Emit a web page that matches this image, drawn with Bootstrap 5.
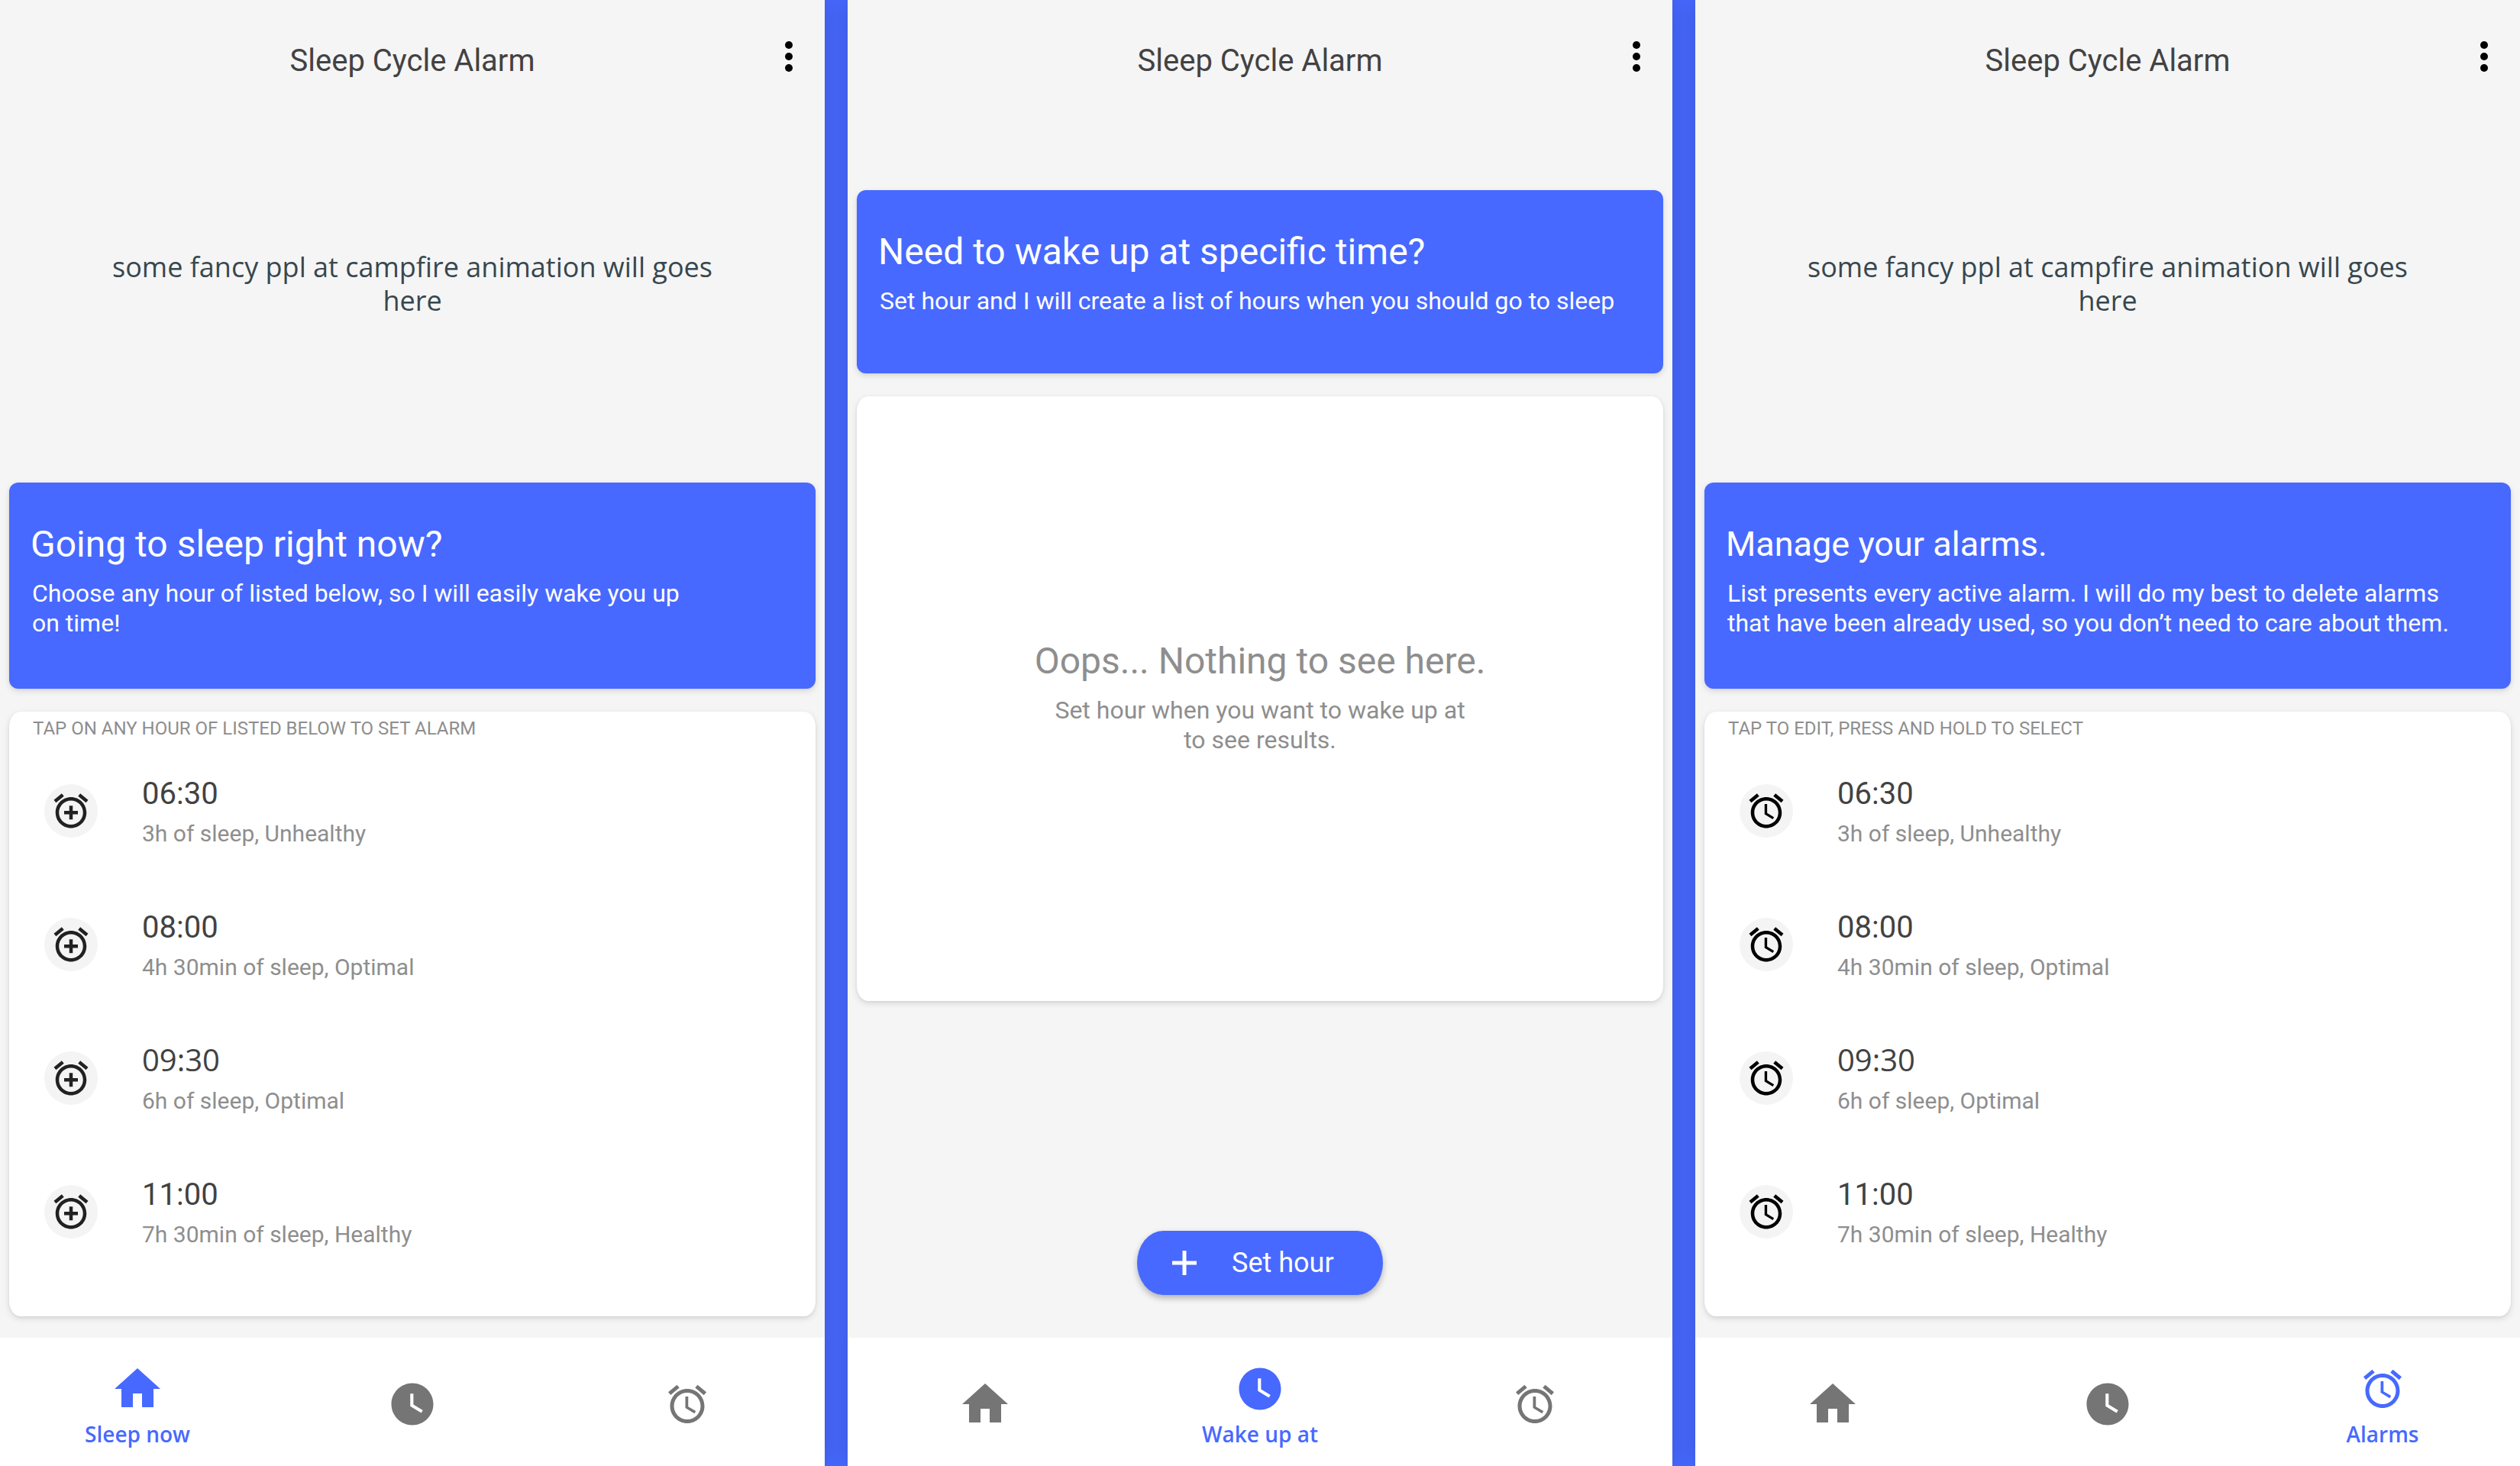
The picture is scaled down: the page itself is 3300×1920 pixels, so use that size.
<!DOCTYPE html>
<html lang="en">
<head>
<meta charset="utf-8">
<meta name="viewport" content="width=device-width, initial-scale=1">
<title>Sleep Cycle Alarm</title>
<link href="https://cdn.jsdelivr.net/npm/bootstrap@5.3.0/dist/css/bootstrap.min.css" rel="stylesheet">
<style>
  :root { --sca-blue: #4769ff; --sca-page: #f5f5f5; --sca-muted: #8e8e8e; }
  body { background: var(--sca-blue); font-family: Roboto, sans-serif; color: #424242; }
  .screens { gap: 30px; min-height: 100vh; }
  .screen { flex: 1 1 0; min-width: 0; background: var(--sca-page); box-shadow: 0 0 30px rgba(0, 0, 0, .16); }
  .topbar { height: 156px; padding: 4px 21px 0; }
  .topbar h1 { font-size: 40px; line-height: 48px; font-weight: 400; margin: 0; }
  .menu-btn, .menu-space { width: 52px; }
  .menu-btn { border: 0; background: none; padding: 0; line-height: 0; margin-bottom: 12px; }
  .scene { height: 476px; padding: 172px 130px 0; font: 400 36px/44px "Open Sans", sans-serif; color: #37474f; }
  .scene-none { height: 93px; }
  .content { padding: 0 12px; gap: 30px; }
  .panel { border: 0; box-shadow: 0 3px 8px rgba(0, 0, 0, .12), 0 1px 3px rgba(0, 0, 0, .06); }
  .hero { background: var(--sca-blue); color: #fff; border-radius: 12px; padding: 53px 30px 66px; }
  .hero h2, .empty h2 { font-size: 48px; line-height: 56px; font-weight: 400; margin: 0 0 17px; }
  .hero h2 { margin-left: -2px; }
  .hero p, .empty p { font-size: 32px; line-height: 39px; margin: 0; }
  .hero-one { padding-bottom: 75px; }
  .hero .title-compact { font-size: 45px; }
  .sheet { background: #fff; border-radius: 15px / 20px; height: 792px; }
  .sheet-note { font-size: 24px; line-height: 28px; color: var(--sca-muted); margin: 0; padding: 8px 31px 0; text-transform: uppercase; }
  .hours { margin: 0; padding: 0; list-style: none; }
  .hours li { height: 175px; padding: 59px 46px 0; gap: 58px; }
  .dot { width: 70px; height: 70px; background: #f4f4f4; flex: none; }
  .hour-text { margin-top: -11px; }
  .hour { font-size: 40px; line-height: 48px; color: #424242; }
  .hour-alt { font-family: "Open Sans", sans-serif; line-height: 44px; padding-bottom: 4px; }
  .detail { font-size: 30px; line-height: 36px; margin-top: 10px; color: var(--sca-muted); }
  .empty { color: var(--sca-muted); padding-bottom: 3px; }
  .set-hour { width: 322px; height: 84px; border: 0; border-radius: 34px / 42px; background: var(--sca-blue); color: #fff; font-size: 36px; line-height: 44px; gap: 44px; padding: 0 0 0 44px; box-shadow: 0 4px 8px rgba(0, 0, 0, .28); margin-bottom: 56px; }
  .tabbar { height: 168px; background: #fff; padding-top: 6px; }
  .tab { flex: 1 1 0; gap: 5px; color: #757575; text-decoration: none; font: 600 28px/36px "Open Sans", sans-serif; }
  .tab-icon { width: 72px; height: 72px; }
  .tab.active { color: var(--sca-blue); padding-top: 1px; }
</style>
</head>
<body>
<svg class="d-none" xmlns="http://www.w3.org/2000/svg">
  <symbol id="i-home" viewBox="0 0 24 24"><path d="M10 20v-6h4v6h5v-8h3L12 3 2 12h3v8z"/></symbol>
  <symbol id="i-clock" viewBox="0 0 24 24"><path d="M12 2C6.500 2 2 6.500 2 12s4.500 10 10 10 10-4.500 10-10S17.500 2 12 2zm4.200 14.200L11 13V7h1.500v5.200l4.500 2.700-.8 1.300z"/></symbol>
  <symbol id="i-alarm" viewBox="0 0 24 24"><path d="M22 5.720l-4.600-3.860-1.290 1.530 4.600 3.860L22 5.720zM7.880 3.390L6.600 1.860 2 5.710l1.290 1.530 4.590-3.850zM12.500 8H11v6l4.750 2.850.75-1.230-4-2.370V8zM12 4c-4.970 0-9 4.030-9 9s4.020 9 9 9c4.970 0 9-4.030 9-9s-4.030-9-9-9zm0 16c-3.870 0-7-3.130-7-7s3.130-7 7-7 7 3.130 7 7-3.130 7-7 7z"/></symbol>
  <symbol id="i-alarm-add" viewBox="0 0 24 24"><path d="M7.880 3.390L6.600 1.860 2 5.710l1.290 1.530 4.590-3.850zM22 5.720l-4.600-3.860-1.290 1.530 4.600 3.860L22 5.720zM12 4c-4.970 0-9 4.030-9 9s4.020 9 9 9c4.970 0 9-4.030 9-9s-4.030-9-9-9zm0 16c-3.870 0-7-3.130-7-7s3.130-7 7-7 7 3.130 7 7-3.130 7-7 7zm1-11h-2v3H8v2h3v3h2v-3h3v-2h-3V9z"/></symbol>
  <symbol id="i-more" viewBox="0 0 12 42"><circle cx="6" cy="6" r="5"/><circle cx="6" cy="21" r="5"/><circle cx="6" cy="36" r="5"/></symbol>
</svg>

<div class="screens d-flex">

  <section class="screen d-flex flex-column">
    <header class="topbar d-flex align-items-center justify-content-between">
      <span class="menu-space"></span>
      <h1>Sleep Cycle Alarm</h1>
      <button class="menu-btn" type="button" aria-label="More options"><svg width="12" height="42"><use href="#i-more"/></svg></button>
    </header>
    <div class="scene text-center">some fancy ppl at campfire animation will goes here</div>
    <main class="content d-flex flex-column flex-grow-1">
      <div class="panel hero">
        <h2>Going to sleep right now?</h2>
        <p>Choose any hour of listed below, so I will easily wake you up<br>on time!</p>
      </div>
      <div class="panel sheet">
        <p class="sheet-note">Tap on any hour of listed below to set alarm</p>
        <ul class="hours">
          <li class="d-flex"><span class="dot rounded-circle d-flex align-items-center justify-content-center"><svg width="54" height="54" fill="#212121"><use href="#i-alarm-add"/></svg></span><div class="hour-text"><div class="hour">06:30</div><div class="detail">3h of sleep, Unhealthy</div></div></li>
          <li class="d-flex"><span class="dot rounded-circle d-flex align-items-center justify-content-center"><svg width="54" height="54" fill="#212121"><use href="#i-alarm-add"/></svg></span><div class="hour-text"><div class="hour">08:00</div><div class="detail">4h 30min of sleep, Optimal</div></div></li>
          <li class="d-flex"><span class="dot rounded-circle d-flex align-items-center justify-content-center"><svg width="54" height="54" fill="#212121"><use href="#i-alarm-add"/></svg></span><div class="hour-text"><div class="hour hour-alt">09:30</div><div class="detail">6h of sleep, Optimal</div></div></li>
          <li class="d-flex"><span class="dot rounded-circle d-flex align-items-center justify-content-center"><svg width="54" height="54" fill="#212121"><use href="#i-alarm-add"/></svg></span><div class="hour-text"><div class="hour">11:00</div><div class="detail">7h 30min of sleep, Healthy</div></div></li>
        </ul>
      </div>
    </main>
    <nav class="tabbar d-flex">
      <a class="tab active d-flex flex-column align-items-center justify-content-center" href="#"><span class="tab-icon d-flex align-items-center justify-content-center"><svg width="72" height="72" fill="currentColor"><use href="#i-home"/></svg></span>Sleep now</a>
      <a class="tab d-flex flex-column align-items-center justify-content-center" href="#" aria-label="Wake up at"><span class="tab-icon d-flex align-items-center justify-content-center"><svg width="66" height="66" fill="currentColor"><use href="#i-clock"/></svg></span></a>
      <a class="tab d-flex flex-column align-items-center justify-content-center" href="#" aria-label="Alarms"><span class="tab-icon d-flex align-items-center justify-content-center"><svg width="60" height="60" fill="currentColor"><use href="#i-alarm"/></svg></span></a>
    </nav>
  </section>

  <section class="screen d-flex flex-column">
    <header class="topbar d-flex align-items-center justify-content-between">
      <span class="menu-space"></span>
      <h1>Sleep Cycle Alarm</h1>
      <button class="menu-btn" type="button" aria-label="More options"><svg width="12" height="42"><use href="#i-more"/></svg></button>
    </header>
    <div class="scene-none"></div>
    <main class="content d-flex flex-column flex-grow-1">
      <div class="panel hero hero-one">
        <h2>Need to wake up at specific time?</h2>
        <p>Set hour and I will create a list of hours when you should go to sleep</p>
      </div>
      <div class="panel sheet empty d-flex flex-column align-items-center justify-content-center text-center">
        <h2>Oops... Nothing to see here.</h2>
        <p>Set hour when you want to wake up at<br>to see results.</p>
      </div>
      <button class="set-hour d-flex align-items-center align-self-center mt-auto" type="button"><svg width="36" height="36" viewBox="0 0 36 36" fill="none" stroke="currentColor" stroke-width="5"><path d="M18 2v32M2 18h32"/></svg>Set hour</button>
    </main>
    <nav class="tabbar d-flex">
      <a class="tab d-flex flex-column align-items-center justify-content-center" href="#" aria-label="Sleep now"><span class="tab-icon d-flex align-items-center justify-content-center"><svg width="72" height="72" fill="currentColor"><use href="#i-home"/></svg></span></a>
      <a class="tab active d-flex flex-column align-items-center justify-content-center" href="#"><span class="tab-icon d-flex align-items-center justify-content-center"><svg width="66" height="66" fill="currentColor"><use href="#i-clock"/></svg></span>Wake up at</a>
      <a class="tab d-flex flex-column align-items-center justify-content-center" href="#" aria-label="Alarms"><span class="tab-icon d-flex align-items-center justify-content-center"><svg width="60" height="60" fill="currentColor"><use href="#i-alarm"/></svg></span></a>
    </nav>
  </section>

  <section class="screen d-flex flex-column">
    <header class="topbar d-flex align-items-center justify-content-between">
      <span class="menu-space"></span>
      <h1>Sleep Cycle Alarm</h1>
      <button class="menu-btn" type="button" aria-label="More options"><svg width="12" height="42"><use href="#i-more"/></svg></button>
    </header>
    <div class="scene text-center">some fancy ppl at campfire animation will goes here</div>
    <main class="content d-flex flex-column flex-grow-1">
      <div class="panel hero">
        <h2 class="title-compact">Manage your alarms.</h2>
        <p>List presents every active alarm. I will do my best to delete alarms<br>that have been already used, so you don’t need to care about them.</p>
      </div>
      <div class="panel sheet">
        <p class="sheet-note">Tap to edit, press and hold to select</p>
        <ul class="hours">
          <li class="d-flex"><span class="dot rounded-circle d-flex align-items-center justify-content-center"><svg width="54" height="54" fill="#000"><use href="#i-alarm"/></svg></span><div class="hour-text"><div class="hour">06:30</div><div class="detail">3h of sleep, Unhealthy</div></div></li>
          <li class="d-flex"><span class="dot rounded-circle d-flex align-items-center justify-content-center"><svg width="54" height="54" fill="#000"><use href="#i-alarm"/></svg></span><div class="hour-text"><div class="hour">08:00</div><div class="detail">4h 30min of sleep, Optimal</div></div></li>
          <li class="d-flex"><span class="dot rounded-circle d-flex align-items-center justify-content-center"><svg width="54" height="54" fill="#000"><use href="#i-alarm"/></svg></span><div class="hour-text"><div class="hour hour-alt">09:30</div><div class="detail">6h of sleep, Optimal</div></div></li>
          <li class="d-flex"><span class="dot rounded-circle d-flex align-items-center justify-content-center"><svg width="54" height="54" fill="#000"><use href="#i-alarm"/></svg></span><div class="hour-text"><div class="hour">11:00</div><div class="detail">7h 30min of sleep, Healthy</div></div></li>
        </ul>
      </div>
    </main>
    <nav class="tabbar d-flex">
      <a class="tab d-flex flex-column align-items-center justify-content-center" href="#" aria-label="Sleep now"><span class="tab-icon d-flex align-items-center justify-content-center"><svg width="72" height="72" fill="currentColor"><use href="#i-home"/></svg></span></a>
      <a class="tab d-flex flex-column align-items-center justify-content-center" href="#" aria-label="Wake up at"><span class="tab-icon d-flex align-items-center justify-content-center"><svg width="66" height="66" fill="currentColor"><use href="#i-clock"/></svg></span></a>
      <a class="tab active d-flex flex-column align-items-center justify-content-center" href="#"><span class="tab-icon d-flex align-items-center justify-content-center"><svg width="60" height="60" fill="currentColor"><use href="#i-alarm"/></svg></span>Alarms</a>
    </nav>
  </section>

</div>
<script src="https://cdn.jsdelivr.net/npm/bootstrap@5.3.0/dist/js/bootstrap.bundle.min.js"></script>
</body>
</html>
